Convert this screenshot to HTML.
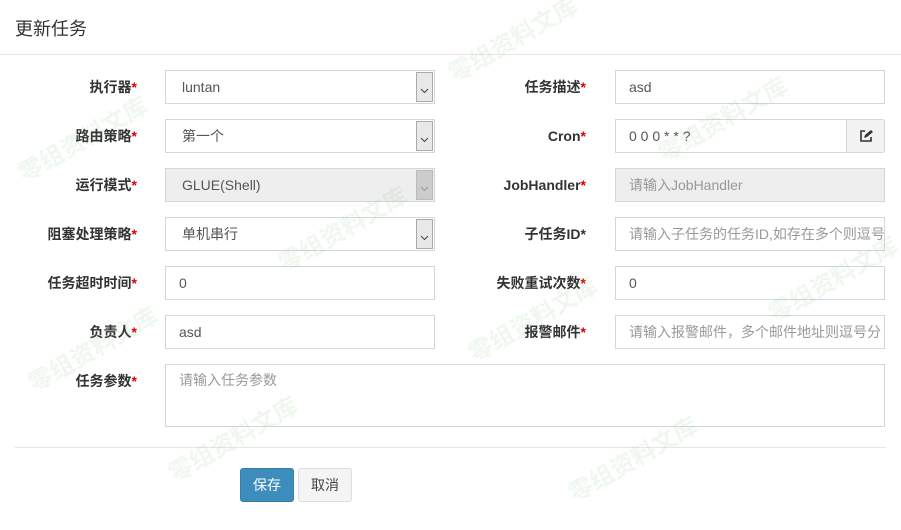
<!DOCTYPE html>
<html><head><meta charset="utf-8"><style>
*{box-sizing:border-box;margin:0;padding:0}
body{width:901px;height:530px;background:#fff;font-family:"Liberation Sans","Noto Sans CJK SC",sans-serif;font-size:14px;color:#333;position:relative;overflow:hidden}
.title{position:absolute;left:15px;top:15px;font-size:18px;color:#333}
.hr{position:absolute;left:0;right:0;height:1px;background:#e5e5e5}
.lbl{position:absolute;width:137px;text-align:right;font-weight:bold;font-size:14px;line-height:34px;color:#333}
.lbl i{color:#d00;font-style:normal}
.in{position:absolute;height:34px;border:1px solid #d2d6de;line-height:32px;padding-left:16px;color:#555;background:#fff}
.ph{color:#999}
.dis{background:#eee}
.sel .ar{position:absolute;right:1px;top:1px;width:17px;height:30px;border:1px solid #aaa;background:#e8e8e8;text-align:center}
.ar svg{margin-top:11px}
.addon{position:absolute;height:34px;border:1px solid #d2d6de;background:#f2f2f2;border-radius:0 3px 3px 0}
.btn{position:absolute;top:468px;height:34px;width:54px;border-radius:3px;line-height:32px;text-align:center;font-size:14px}
.wm{position:absolute;color:rgba(120,190,120,0.12);font-size:24px;transform:rotate(-30deg);white-space:nowrap;font-weight:bold;pointer-events:none}
</style></head><body>
<div class="title">更新任务</div>
<div class="hr" style="top:54px"></div>

<div class="lbl" style="left:0;top:70px">执行器<i>*</i></div>
<div class="in sel" style="left:165px;top:70px;width:270px">luntan<div class="ar"><svg width="9" height="6"><path d="M1 1l3.5 3.5L8 1" stroke="#444" fill="none"/></svg></div></div>
<div class="lbl" style="left:449px;top:70px">任务描述<i>*</i></div>
<div class="in" style="left:615px;top:70px;width:270px;padding-left:13px">asd</div>

<div class="lbl" style="left:0;top:119px">路由策略<i>*</i></div>
<div class="in sel" style="left:165px;top:119px;width:270px">第一个<div class="ar"><svg width="9" height="6"><path d="M1 1l3.5 3.5L8 1" stroke="#444" fill="none"/></svg></div></div>
<div class="lbl" style="left:449px;top:119px">Cron<i>*</i></div>
<div class="in" style="left:615px;top:119px;width:232px;padding-left:13px">0 0 0 * * ?</div>
<div class="addon" style="left:846px;top:119px;width:39px"><svg width="14" height="14" style="position:absolute;left:12px;top:9px"><path d="M6 2H2v10h10V8" stroke="#333" stroke-width="1.6" fill="none"/><path d="M5 9l1-3 6-5 2 2-6 5z" fill="#333"/></svg></div>

<div class="lbl" style="left:0;top:168px">运行模式<i>*</i></div>
<div class="in sel dis" style="left:165px;top:168px;width:270px">GLUE(Shell)<div class="ar" style="background:#ccc;border-color:#bbb"><svg width="9" height="6"><path d="M1 1l3.5 3.5L8 1" stroke="#999" fill="none"/></svg></div></div>
<div class="lbl" style="left:449px;top:168px">JobHandler<i>*</i></div>
<div class="in dis ph" style="left:615px;top:168px;width:270px;padding-left:13px">请输入JobHandler</div>

<div class="lbl" style="left:0;top:217px">阻塞处理策略<i>*</i></div>
<div class="in sel" style="left:165px;top:217px;width:270px">单机串行<div class="ar"><svg width="9" height="6"><path d="M1 1l3.5 3.5L8 1" stroke="#444" fill="none"/></svg></div></div>
<div class="lbl" style="left:449px;top:217px">子任务ID*</div>
<div class="in ph" style="left:615px;top:217px;width:270px;overflow:hidden;white-space:nowrap;padding-left:13px">请输入子任务的任务ID,如存在多个则逗号</div>

<div class="lbl" style="left:0;top:266px">任务超时时间<i>*</i></div>
<div class="in" style="left:165px;top:266px;width:270px;padding-left:13px">0</div>
<div class="lbl" style="left:449px;top:266px">失败重试次数<i>*</i></div>
<div class="in" style="left:615px;top:266px;width:270px;padding-left:13px">0</div>

<div class="lbl" style="left:0;top:315px">负责人<i>*</i></div>
<div class="in" style="left:165px;top:315px;width:270px;padding-left:13px">asd</div>
<div class="lbl" style="left:449px;top:315px">报警邮件<i>*</i></div>
<div class="in ph" style="left:615px;top:315px;width:270px;overflow:hidden;white-space:nowrap;padding-left:13px">请输入报警邮件，多个邮件地址则逗号分</div>

<div class="lbl" style="left:0;top:364px">任务参数<i>*</i></div>
<div class="in ph" style="left:165px;top:364px;width:720px;height:63px;line-height:30px;padding-left:13px">请输入任务参数</div>

<div class="hr" style="top:447px;left:15px;right:15px"></div>
<div class="btn" style="left:240px;background:#3c8dbc;border:1px solid #367fa9;color:#fff">保存</div>
<div class="btn" style="left:298px;background:#f4f4f4;border:1px solid #ddd;color:#444">取消</div>

<div class="wm" style="left:440px;top:20px">零组资料文库</div>
<div class="wm" style="left:10px;top:120px">零组资料文库</div>
<div class="wm" style="left:270px;top:210px">零组资料文库</div>
<div class="wm" style="left:650px;top:100px">零组资料文库</div>
<div class="wm" style="left:20px;top:330px">零组资料文库</div>
<div class="wm" style="left:460px;top:300px">零组资料文库</div>
<div class="wm" style="left:160px;top:420px">零组资料文库</div>
<div class="wm" style="left:560px;top:440px">零组资料文库</div>
<div class="wm" style="left:760px;top:260px">零组资料文库</div>
</body></html>
